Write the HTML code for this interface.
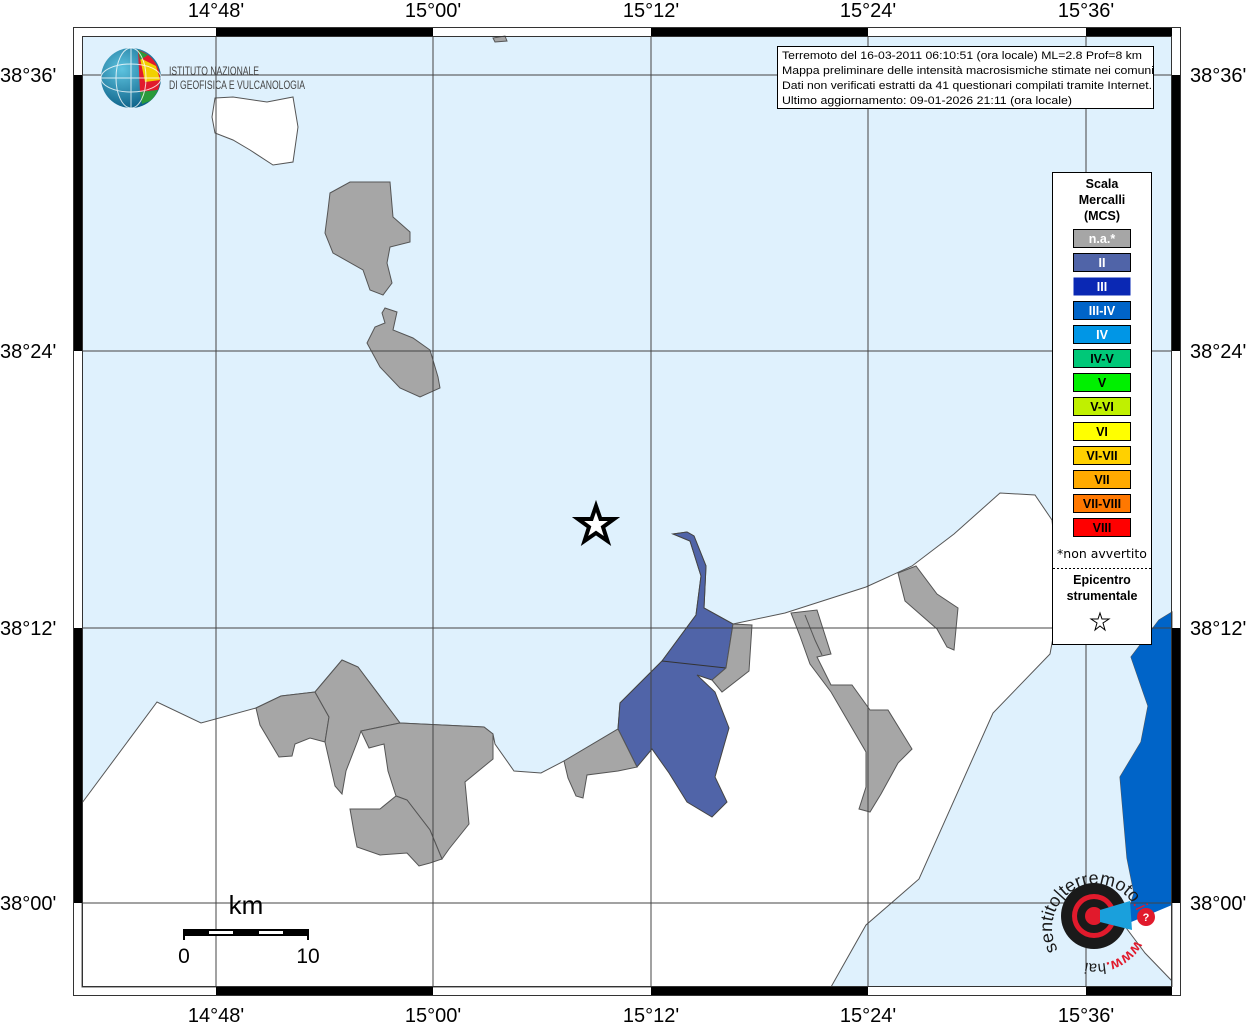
<!DOCTYPE html>
<html><head><meta charset="utf-8"><style>
html,body{margin:0;padding:0;background:#fff;width:1254px;height:1024px;overflow:hidden}
svg{display:block}
text{font-family:"Liberation Sans",sans-serif}
</style></head><body>
<svg width="1254" height="1024" viewBox="0 0 1254 1024" xmlns="http://www.w3.org/2000/svg">
<rect x="82" y="36" width="1090" height="951" fill="#dff1fd"/>
<path d="M82,803 L157,702 L201,723 L256,708 L281,696 L315,692 L342,660 L358,667 L400,723 L484,727 L493,734 L495,744 L514,771 L541,773 L564,761 L618,729 L620,703 L662,661 L696,615 L701,576 L690,541 L673,534 L687,532 L694,536 L706,566 L704,608 L733,624 L785,613 L866,587 L912,566 L954,534 L1000,493 L1035,495 L1052,520 L1060,600 L1050,654 L993,713 L919,879 L866,925 L831,987 L82,987 Z" fill="#fff" stroke="#555" stroke-width="1"/>
<path d="M1172,612 L1159,620 L1131,657 L1148,706 L1141,742 L1120,777 L1127,858 L1134,893 L1124,925 L1145,953 L1172,981 L1172,987 L1172,612 Z" fill="#fff" stroke="#555" stroke-width="1"/>
<path d="M1172,612 L1159,620 L1131,657 L1148,706 L1141,742 L1120,777 L1127,858 L1134,893 L1124,925 L1172,905 Z" fill="#0064c8"/>
<path d="M215,98 L233,97 L267,102 L293,97 L298,127 L293,162 L273,165 L250,150 L233,140 L215,133 L212,117 Z" fill="#fff" stroke="#555"/>
<path d="M330,193 L350,182 L390,182 L393,217 L410,232 L410,242 L390,247 L387,263 L392,283 L383,295 L370,290 L363,270 L333,253 L325,233 L328,210 Z" fill="#a6a6a6" stroke="#555"/>
<path d="M385,308 L397,312 L393,330 L413,338 L430,350 L438,377 L440,388 L420,397 L400,388 L380,367 L367,343 L375,327 L385,323 L382,313 Z" fill="#a6a6a6" stroke="#555"/>
<path d="M493,38 L505,36 L507,41 L495,42 Z" fill="#a6a6a6" stroke="#555"/>
<g fill="#a6a6a6" stroke="#555" stroke-width="1">
<path d="M256,708 L281,696 L315,692 L329,717 L325,742 L310,738 L295,744 L292,756 L279,757 L260,725 Z"/>
<path d="M315,692 L342,660 L358,667 L400,723 L361,731 L358,740 L346,771 L342,794 L335,786 L325,742 L329,717 Z"/>
<path d="M361,731 L400,723 L484,727 L493,734 L493,759 L465,782 L469,824 L449,849 L442,859 L430,830 L407,800 L396,796 L388,771 L384,744 L369,748 Z"/>
<path d="M350,809 L380,809 L396,796 L407,800 L430,830 L442,859 L430,863 L419,866 L407,853 L380,855 L357,847 L354,832 Z"/>
</g>
<path d="M620,703 L662,661 L696,615 L701,576 L690,541 L673,534 L687,532 L694,536 L706,566 L704,608 L733,624 L726,668 L712,680 L697,675 L715,692 L729,728 L715,777 L727,802 L712,817 L687,802 L669,773 L652,749 L637,767 L618,729 Z" fill="#5064a8" stroke="#444"/>
<path d="M662,661 L726,668" stroke="#333" fill="none"/>
<g fill="#a6a6a6" stroke="#555" stroke-width="1">
<path d="M564,761 L618,729 L637,767 L618,771 L587,775 L583,798 L576,796 L568,778 Z"/>
<path d="M733,624 L752,625 L749,671 L722,692 L712,680 L726,668 Z"/>
<path d="M791,613 L817,610 L831,654 L817,657 L831,685 L852,685 L870,710 L888,710 L912,749 L898,763 L881,794 L870,812 L859,809 L866,787 L866,752 L852,728 L831,692 L810,664 L800,636 Z"/>
<path d="M805,615 L815,640 L822,655" fill="none"/>
<path d="M898,573 L916,566 L937,594 L958,608 L954,650 L947,647 L937,629 L905,601 Z"/>
</g>
<g stroke="#444" stroke-width="1" fill="none">
<line x1="216" y1="36" x2="216" y2="987"/><line x1="433" y1="36" x2="433" y2="987"/><line x1="651" y1="36" x2="651" y2="987"/><line x1="868" y1="36" x2="868" y2="987"/><line x1="1086" y1="36" x2="1086" y2="987"/>
<line x1="82" y1="75" x2="1172" y2="75"/><line x1="82" y1="351" x2="1172" y2="351"/><line x1="82" y1="628" x2="1172" y2="628"/><line x1="82" y1="903" x2="1172" y2="903"/>
</g>
<g fill="#000">
<rect x="216" y="27" width="217" height="9"/><rect x="651" y="27" width="217" height="9"/><rect x="1086" y="27" width="86" height="9"/>
<rect x="216" y="987" width="217" height="9"/><rect x="651" y="987" width="217" height="9"/><rect x="1086" y="987" width="86" height="9"/>
<rect x="73" y="75" width="9" height="276"/><rect x="73" y="628" width="9" height="275"/>
<rect x="1172" y="75" width="9" height="276"/><rect x="1172" y="628" width="9" height="275"/>
</g>
<rect x="73.5" y="27.5" width="1107" height="968" fill="none" stroke="#333"/>
<rect x="82.5" y="36.5" width="1089" height="950" fill="none" stroke="#333"/>
<g font-size="20" fill="#000" text-anchor="middle">
<text x="216" y="17">14°48'</text><text x="433" y="17">15°00'</text><text x="651" y="17">15°12'</text><text x="868" y="17">15°24'</text><text x="1086" y="17">15°36'</text>
<text x="216" y="1022">14°48'</text><text x="433" y="1022">15°00'</text><text x="651" y="1022">15°12'</text><text x="868" y="1022">15°24'</text><text x="1086" y="1022">15°36'</text>
</g>
<g font-size="20" fill="#000">
<text x="0" y="82">38°36'</text><text x="0" y="358">38°24'</text><text x="0" y="635">38°12'</text><text x="0" y="910">38°00'</text>
<text x="1190" y="82">38°36'</text><text x="1190" y="358">38°24'</text><text x="1190" y="635">38°12'</text><text x="1190" y="910">38°00'</text>
</g>
<path d="M596,506 L600.5,519 L614,519 L603,527 L607.5,541 L596,533 L584.5,541 L589,527 L578,519 L591.5,519 Z" fill="#fff" stroke="#000" stroke-width="4" stroke-linejoin="miter"/>
<defs><radialGradient id="g" cx="0.35" cy="0.35" r="0.7"><stop offset="0" stop-color="#5ec4e0"/><stop offset="1" stop-color="#0b5f86"/></radialGradient></defs>
<circle cx="131" cy="78" r="30" fill="url(#g)"/>
<path d="M138,50 A30,30 0 0 1 158,90 L140,92 Z" fill="#e11a2c"/>
<path d="M140,58 L156,66 L160,80 L145,82 Z" fill="#f2d000"/>
<path d="M140,92 L158,90 A30,30 0 0 1 150,101 L142,104 Z" fill="#2a9a3a"/>
<path d="M138,50 L148,55 L140,60 Z" fill="#2a9a3a"/>
<g stroke="#fff" stroke-width="1" fill="none" opacity="0.8"><path d="M101,78 H161"/><path d="M131,48 V108"/><ellipse cx="131" cy="78" rx="15" ry="30"/><ellipse cx="131" cy="78" rx="30" ry="14"/></g>
<text x="169" y="75" font-size="12" fill="#444" textLength="90" lengthAdjust="spacingAndGlyphs">ISTITUTO NAZIONALE</text>
<text x="169" y="89" font-size="12" fill="#444" textLength="136" lengthAdjust="spacingAndGlyphs">DI GEOFISICA E VULCANOLOGIA</text>
<rect x="777.5" y="46.5" width="376" height="62" fill="#fff" stroke="#000"/>
<g font-size="11" fill="#000">
<text x="782" y="59" textLength="360" lengthAdjust="spacingAndGlyphs">Terremoto del 16-03-2011 06:10:51 (ora locale) ML=2.8 Prof=8 km</text>
<text x="782" y="74" textLength="372" lengthAdjust="spacingAndGlyphs">Mappa preliminare delle intensità macrosismiche stimate nei comuni</text>
<text x="782" y="89" textLength="370" lengthAdjust="spacingAndGlyphs">Dati non verificati estratti da 41 questionari compilati tramite Internet.</text>
<text x="782" y="104" textLength="290" lengthAdjust="spacingAndGlyphs">Ultimo aggiornamento: 09-01-2026 21:11 (ora locale)</text>
</g>
<rect x="1052.5" y="172.5" width="99" height="472" fill="#fff" stroke="#000"/>
<g font-size="12.5" font-weight="bold" text-anchor="middle" style="font-family:'DejaVu Sans','Liberation Sans',sans-serif">
<text x="1102" y="188">Scala</text><text x="1102" y="204">Mercalli</text><text x="1102" y="220">(MCS)</text>
</g>
<g stroke="#000" stroke-width="1">
<rect x="1073.5" y="229.5" width="57" height="18" fill="#a6a6a6"/>
<rect x="1073.5" y="253.5" width="57" height="18" fill="#5064a8"/>
<rect x="1073.5" y="277.5" width="57" height="18" fill="#0a28b4" stroke="none"/>
<rect x="1073.5" y="301.5" width="57" height="18" fill="#0064c8"/>
<rect x="1073.5" y="325.5" width="57" height="18" fill="#0096e6"/>
<rect x="1073.5" y="349.5" width="57" height="18" fill="#00c878"/>
<rect x="1073.5" y="373.5" width="57" height="18" fill="#00f000"/>
<rect x="1073.5" y="397.5" width="57" height="18" fill="#c0f000"/>
<rect x="1073.5" y="422.5" width="57" height="18" fill="#ffff00"/>
<rect x="1073.5" y="446.5" width="57" height="18" fill="#ffd000"/>
<rect x="1073.5" y="470.5" width="57" height="18" fill="#ffaa00"/>
<rect x="1073.5" y="494.5" width="57" height="18" fill="#ff7800"/>
<rect x="1073.5" y="518.5" width="57" height="18" fill="#ff0000"/>
</g>
<g font-size="12.5" font-weight="bold" text-anchor="middle" style="font-family:'DejaVu Sans','Liberation Sans',sans-serif">
<text x="1102" y="243" fill="#fff">n.a.*</text>
<text x="1102" y="267" fill="#fff">II</text>
<text x="1102" y="291" fill="#fff">III</text>
<text x="1102" y="315" fill="#fff">III-IV</text>
<text x="1102" y="339" fill="#fff">IV</text>
<text x="1102" y="363">IV-V</text>
<text x="1102" y="387">V</text>
<text x="1102" y="411">V-VI</text>
<text x="1102" y="436">VI</text>
<text x="1102" y="460">VI-VII</text>
<text x="1102" y="484">VII</text>
<text x="1102" y="508">VII-VIII</text>
<text x="1102" y="532">VIII</text>
</g>
<text x="1102" y="558" font-size="12.5" text-anchor="middle" style="font-family:'DejaVu Sans','Liberation Sans',sans-serif">*non avvertito</text>
<line x1="1053" y1="568.5" x2="1151" y2="568.5" stroke="#000" stroke-dasharray="2,2"/>
<g font-size="12.5" font-weight="bold" text-anchor="middle" style="font-family:'DejaVu Sans','Liberation Sans',sans-serif">
<text x="1102" y="584">Epicentro</text><text x="1102" y="600">strumentale</text></g>
<path d="M1100,613 L1102,619 L1109,619 L1103,623 L1105,630 L1100,626 L1095,630 L1097,623 L1091,619 L1098,619 Z" fill="#fff" stroke="#000" stroke-width="1"/>
<text x="246" y="914" font-size="26" text-anchor="middle">km</text>
<rect x="184" y="929" width="125" height="7" fill="#000"/>
<rect x="209" y="931" width="24" height="3" fill="#fff"/><rect x="259" y="931" width="24" height="3" fill="#fff"/>
<line x1="184" y1="929" x2="184" y2="940" stroke="#000" stroke-width="2"/><line x1="308" y1="929" x2="308" y2="940" stroke="#000" stroke-width="2"/>
<text x="184" y="963" font-size="21" text-anchor="middle">0</text>
<text x="308" y="963" font-size="21" text-anchor="middle">10</text>
<circle cx="1094" cy="916" r="33" fill="#1a1a1a"/>
<circle cx="1094" cy="916" r="22" fill="#e11a2c"/>
<circle cx="1094" cy="916" r="17" fill="#1a1a1a"/>
<circle cx="1094" cy="916" r="9" fill="#e11a2c"/>
<path d="M1100,910 L1130,901 L1132,930 L1100,922 Z" fill="#1aa0dc"/>
<circle cx="1146" cy="917" r="9" fill="#e11a2c"/>
<text x="1146" y="921" font-size="11" fill="#fff" font-weight="bold" text-anchor="middle">?</text>
<defs><path id="arc" d="M1058,950 A44,44 0 1 1 1133,952"/><path id="arc2" d="M1138,935 A45,45 0 0 1 1052,928"/></defs>
<text font-size="18" fill="#1a1a1a"><textPath href="#arc">sentito|terremoto<tspan fill="#e11a2c">.it</tspan></textPath></text>
<text font-size="15" fill="#e11a2c" font-weight="bold"><textPath href="#arc2" startOffset="5%">www.<tspan fill="#1a1a1a" font-weight="normal">hai</tspan></textPath></text>
</svg>
</body></html>
